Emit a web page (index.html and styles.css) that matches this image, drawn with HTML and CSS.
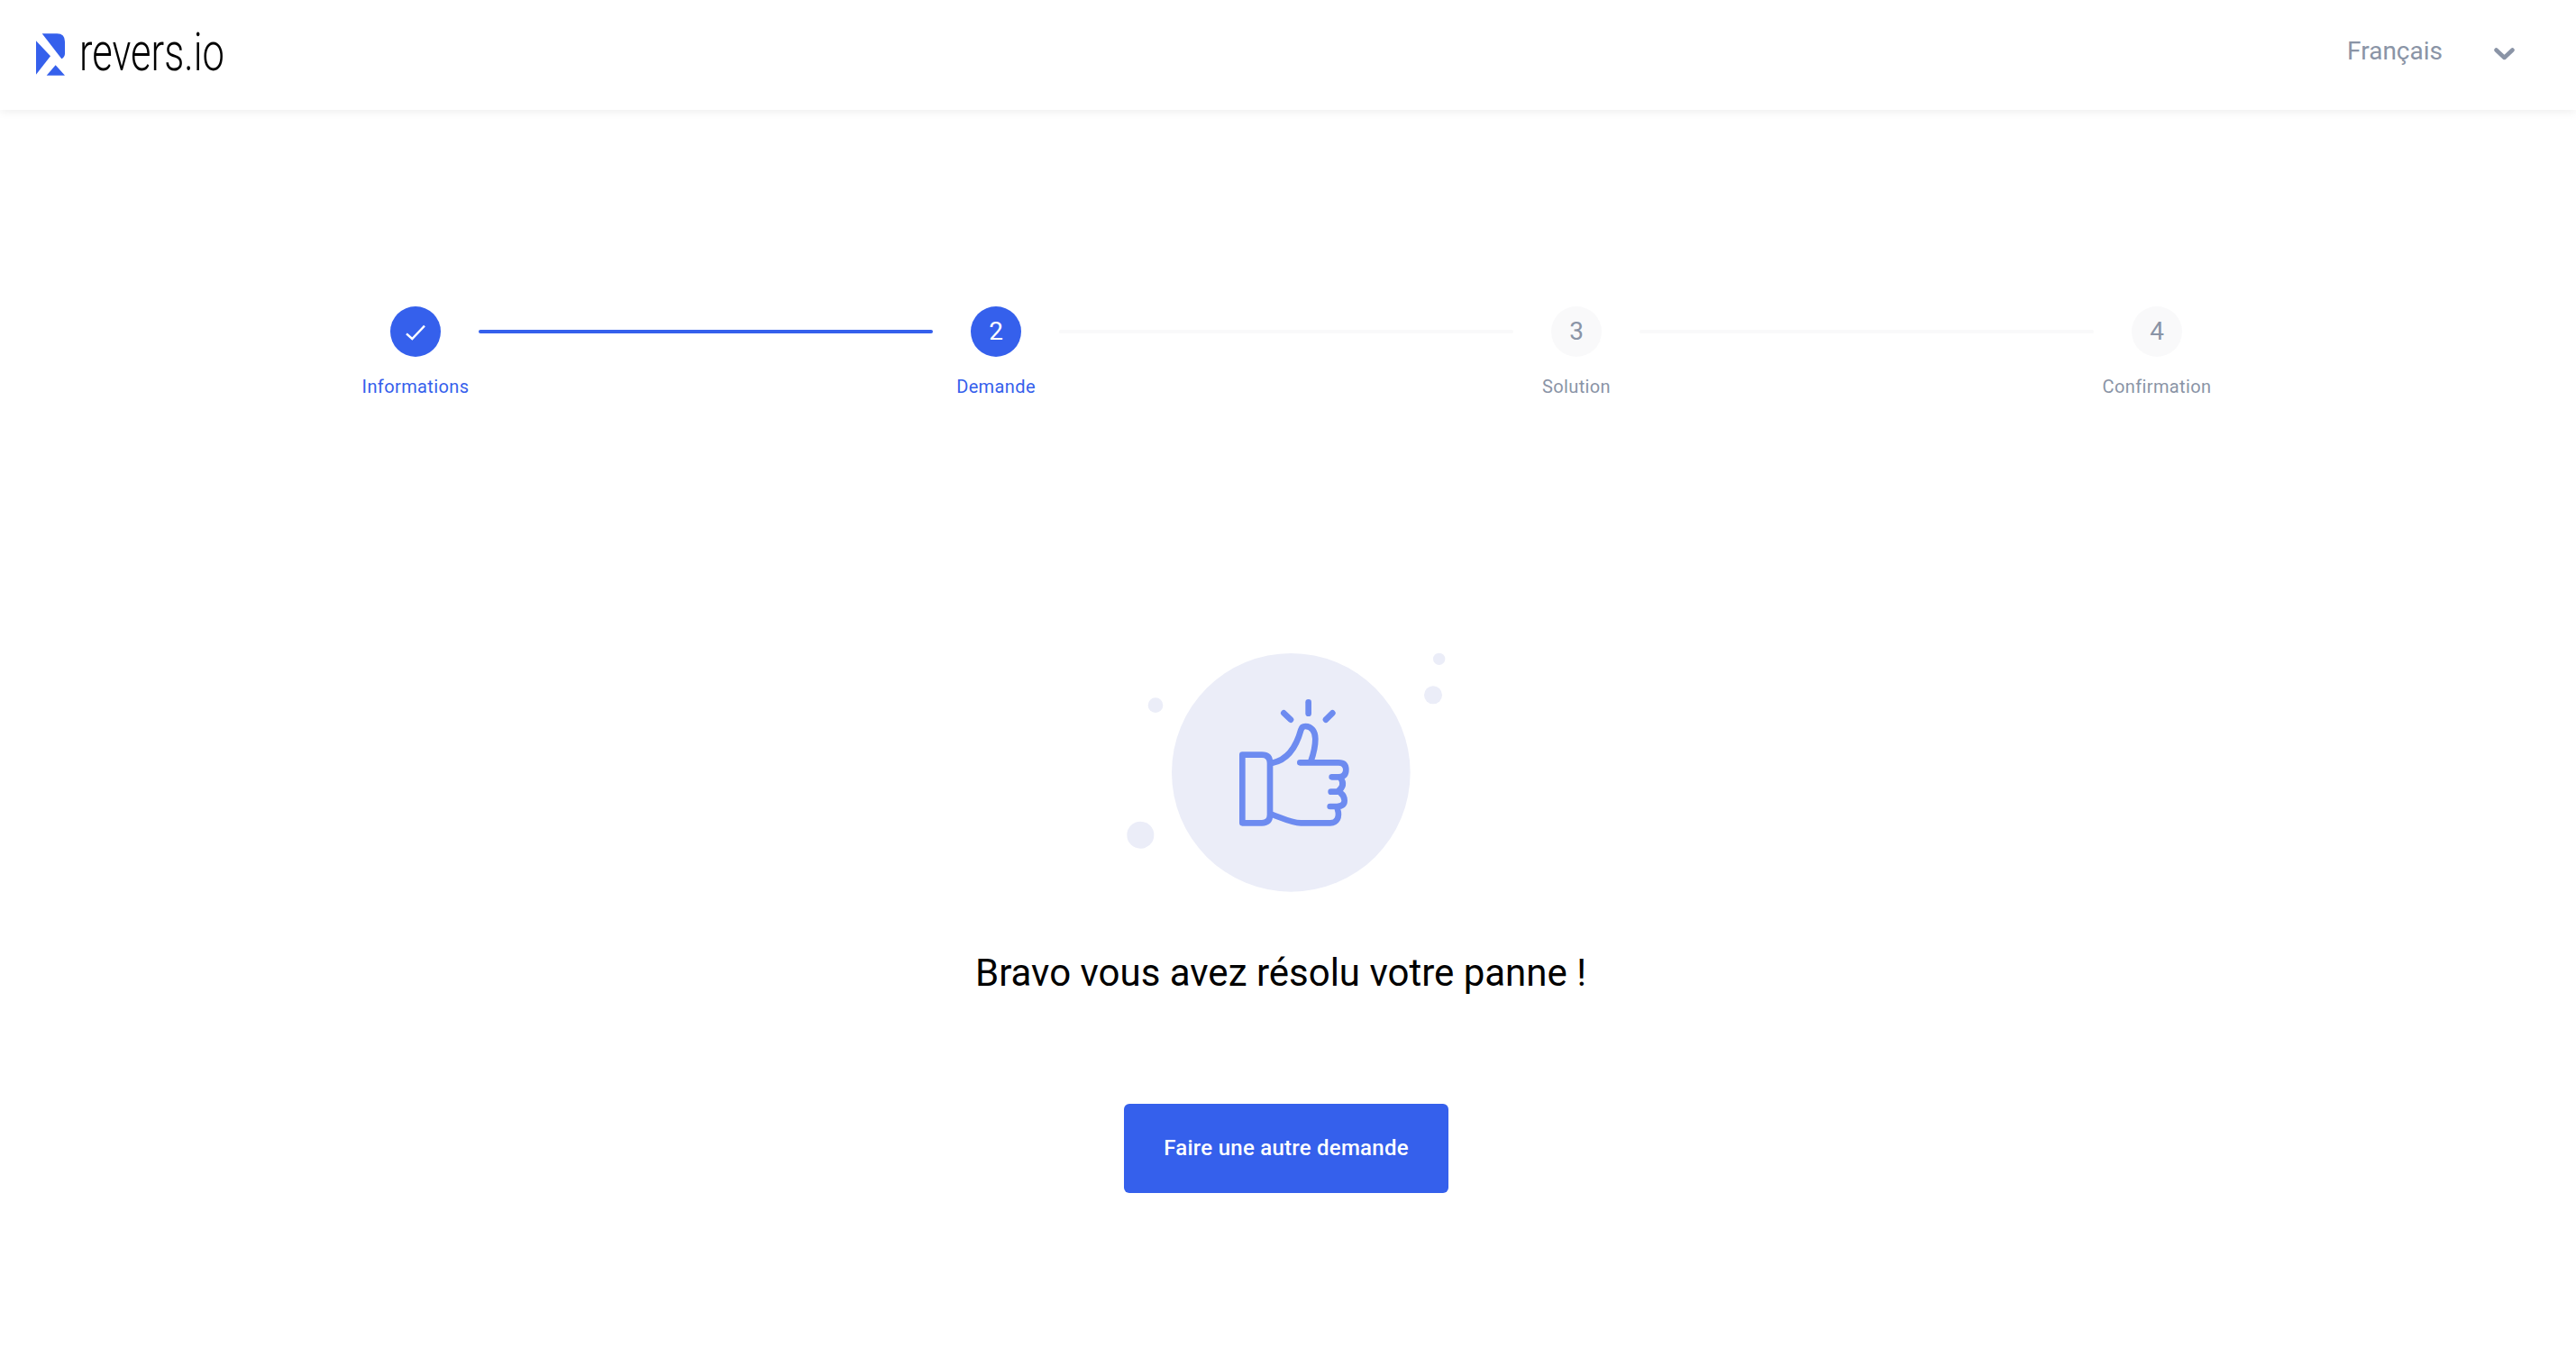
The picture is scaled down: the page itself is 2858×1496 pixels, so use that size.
FILE: index.html
```html
<!DOCTYPE html>
<html lang="fr">
  <head>
    <meta charset="UTF-8" />
    <meta name="viewport" content="width=device-width, initial-scale=1.0" />
    <title>Revers.io</title>
    <link rel="stylesheet" href="styles.css">
  </head>
  <body>
    <header class="header">
      <a href="#" class="logo">
        <svg class="logo-mark" viewBox="0 0 96 140" width="32" height="47">
          <path d="M0 24 L48 75 L0 137 Z" fill="#3560ec" />
          <path d="M20 0 H70 Q96 0 96 27 V66 Q96 78 85 84 Z" fill="#3560ec" />
          <path d="M65 105 L96 140 H35 Z" fill="#3560ec" />
        </svg>
        <span class="logo-text">revers.io</span>
      </a>
      <div class="lang">
        <span>Français</span>
        <svg class="lang-arrow" viewBox="0 0 23 14" width="23" height="14">
          <path d="M2.5 2.5 L11.5 11 L20.5 2.5" />
        </svg>
      </div>
    </header>

    <ol class="stepper">
      <li class="step done">
        <span class="step-circle">
          <svg viewBox="0 0 24 24" width="24" height="24">
            <path d="M2 14.3 L8.3 20 L22 5.7" />
          </svg>
        </span>
        <span class="step-label">Informations</span>
      </li>
      <li class="step-line active"></li>
      <li class="step done">
        <span class="step-circle">2</span>
        <span class="step-label">Demande</span>
      </li>
      <li class="step-line"></li>
      <li class="step">
        <span class="step-circle">3</span>
        <span class="step-label">Solution</span>
      </li>
      <li class="step-line"></li>
      <li class="step">
        <span class="step-circle">4</span>
        <span class="step-label">Confirmation</span>
      </li>
    </ol>

    <main class="result">
      <svg class="result-img" viewBox="9 0 1164 900" width="388" height="300">
        <g fill="#ebedf8">
          <circle cx="607" cy="472" r="397" />
          <circle cx="156" cy="248" r="25" />
          <circle cx="106" cy="680" r="45" />
          <circle cx="1100" cy="94" r="20" />
          <circle cx="1080" cy="214" r="30" />
        </g>
        <g class="thumb">
          <path d="M445 413 H510 Q537 413 537 440 V613 Q537 640 510 640 H445 Z" />
          <path d="M545 440 C595 430 625 385 640 330 Q643 318 655 318 C675 318 688 335 688 360 C688 385 682 410 673 435" />
          <path d="M637 439 H765 Q790 439 790 463 Q790 487 765 487 H743" />
          <path d="M772 490 Q790 515 762 536 H740" />
          <path d="M772 540 Q785 550 785 565 Q785 585 760 585 H737" />
          <path d="M762 595 C770 620 760 640 738 640 H640 C610 640 580 625 545 612" />
          <path d="M665 238 V275" />
          <path d="M583 274 L606 296" />
          <path d="M745 274 L723 296" />
        </g>
      </svg>
      <h1 class="result-title">Bravo vous avez résolu votre panne !</h1>
      <a href="#" class="btn-primary">Faire une autre demande</a>
    </main>
  </body>
</html>
```

FILE: styles.css
```css
body {
  font-family: "Roboto", "Liberation Sans", sans-serif;
  background-color: #ffffff;
  margin: 0;
  padding: 0;
}

.header {
  height: 122px;
  display: flex;
  align-items: center;
  justify-content: space-between;
  padding: 0 68px 0 40px;
  background-color: #ffffff;
  box-shadow: 0 2px 10px rgba(0, 0, 0, 0.07);
}

.logo {
  display: flex;
  align-items: center;
  gap: 16px;
  color: #000000;
  text-decoration: none;
  margin-top: -2px;
}

.logo-mark {
  display: block;
  flex-shrink: 0;
}

.logo-text {
  font-size: 60px;
  font-weight: 300;
  line-height: 60px;
  margin-top: -4px;
  transform: scaleX(0.725);
  transform-origin: left center;
}

.lang {
  display: flex;
  align-items: center;
  gap: 57px;
  color: #8a94a6;
  font-size: 28px;
  margin-top: -9px;
}

.lang-arrow {
  display: block;
  margin-top: 7px;
}

.lang-arrow path {
  fill: none;
  stroke: #8a94a6;
  stroke-width: 4.5;
  stroke-linecap: round;
  stroke-linejoin: round;
}

.stepper {
  display: flex;
  list-style: none;
  width: 2072px;
  margin: 218px 0 0 391px;
  padding: 0;
}

.step {
  width: 140px;
  display: flex;
  flex-direction: column;
  align-items: center;
  color: #8a94a6;
}

.step-circle {
  width: 56px;
  height: 56px;
  border-radius: 50%;
  display: flex;
  align-items: center;
  justify-content: center;
  background-color: #f9f9fa;
  font-size: 28px;
  padding-bottom: 1px;
  box-sizing: border-box;
}

.step-circle path {
  fill: none;
  stroke: #ffffff;
  stroke-width: 2.4;
}

.step-label {
  font-size: 20px;
  letter-spacing: 0.38px;
  margin-top: 18px;
  line-height: 30px;
}

.step.done {
  color: #3560ec;
}

.step.done .step-circle {
  background-color: #3560ec;
  color: #ffffff;
}

.step-line {
  width: 504px;
  height: 4px;
  margin-top: 26px;
  border-radius: 2px;
  background-color: #f9f9fa;
}

.step-line.active {
  background-color: #3560ec;
}

.result {
  display: flex;
  flex-direction: column;
  align-items: center;
  width: 2854px;
  margin-top: 256px;
}

.result-img {
  display: block;
}

.thumb path {
  fill: none;
  stroke: #6d8bf0;
  stroke-width: 20;
  stroke-linecap: round;
  stroke-linejoin: round;
}

.result-title {
  font-size: 42px;
  font-weight: 400;
  line-height: 54px;
  color: #000000;
  margin: 53px 12px 0 0;
}

.btn-primary {
  display: block;
  width: 360px;
  height: 99px;
  line-height: 98px;
  margin-top: 118px;
  text-align: center;
  background-color: #3560ec;
  color: #ffffff;
  font-size: 24px;
  font-weight: 500;
  letter-spacing: 0.25px;
  text-decoration: none;
  border-radius: 6px;
}
```
